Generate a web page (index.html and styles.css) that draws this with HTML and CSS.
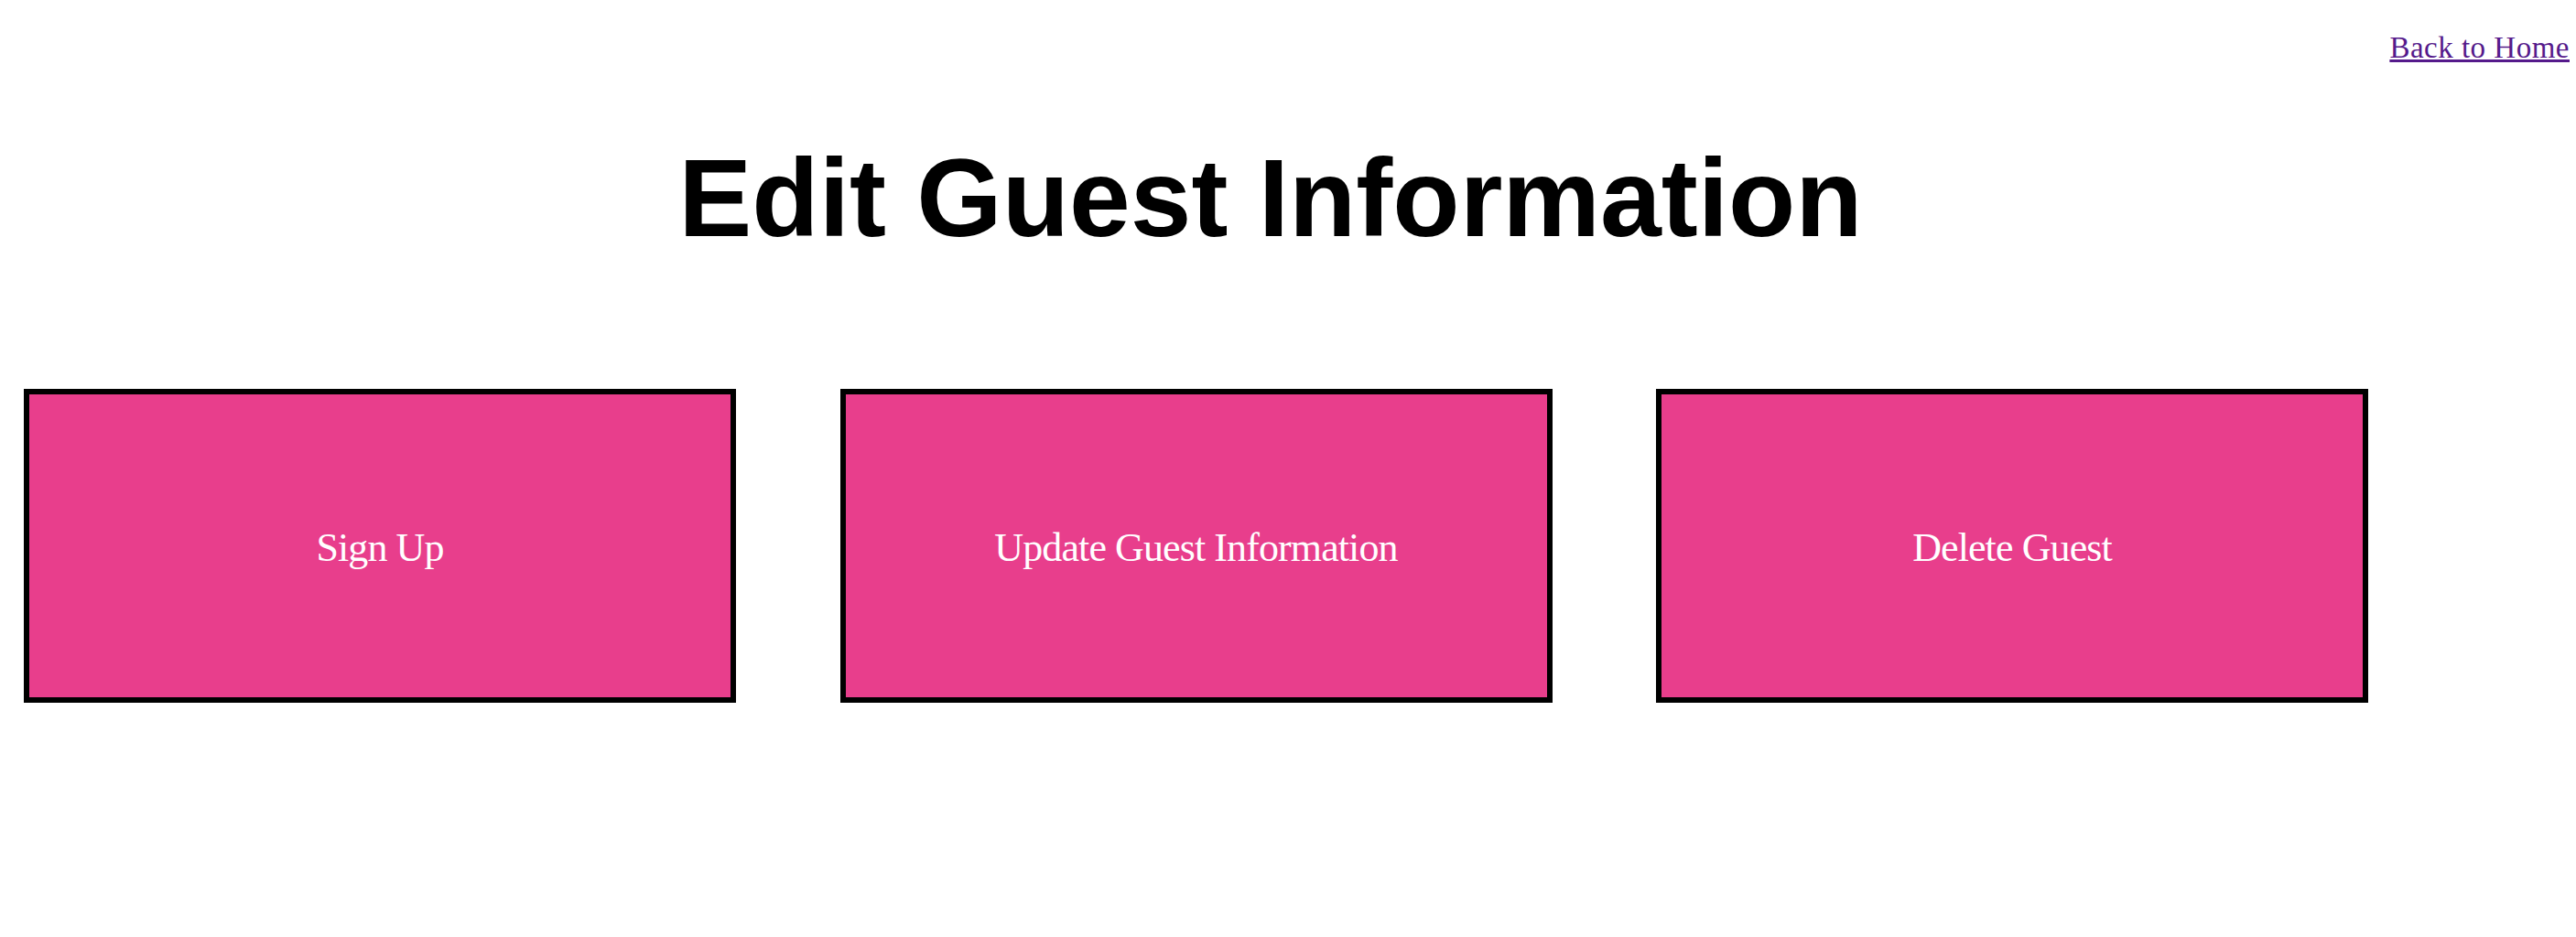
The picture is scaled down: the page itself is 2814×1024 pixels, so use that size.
FILE: index.html
```html
<!DOCTYPE html>
<html lang="en">
<head>
<meta charset="UTF-8" />
<meta name="viewport" content="width=device-width, initial-scale=1" />
<title>Edit Guest Information</title>
<link rel="stylesheet" href="styles.css">
</head>
<body>

<nav class="top">
  <a href="#home">Back to Home</a>
</nav>

<h1>Edit Guest Information</h1>

<main class="actions">
  <a class="action" href="#signup">Sign Up</a>
  <a class="action" href="#update">Update Guest Information</a>
  <a class="action" href="#delete">Delete Guest</a>
</main>

</body>
</html>
```

FILE: styles.css
```css
body { margin: 0; padding: 0; background: #fff; color: #000; font-family: "Liberation Serif", "Times New Roman", serif; }
.top { display: flex; justify-content: flex-end; padding: 34px 7px 0 0; }
.top a { font-size: 33px; line-height: 37px; letter-spacing: 0.5px; color: #551a8b; text-decoration: underline; }
h1 { margin: 76px 0 0; padding-right: 38px; text-align: center; font-family: "Liberation Sans", Arial, sans-serif; font-weight: bold; font-size: 120px; line-height: 138px; }
.actions { display: flex; gap: 113.5px; padding-left: 26px; margin-top: 140px; }
.action { box-sizing: border-box; width: 778px; height: 343px; padding-top: 4px; border: 6px solid #000; background: #e83e8c; color: #fff; text-decoration: none; font-size: 44px; letter-spacing: -0.9px; display: flex; align-items: center; justify-content: center; }
```
